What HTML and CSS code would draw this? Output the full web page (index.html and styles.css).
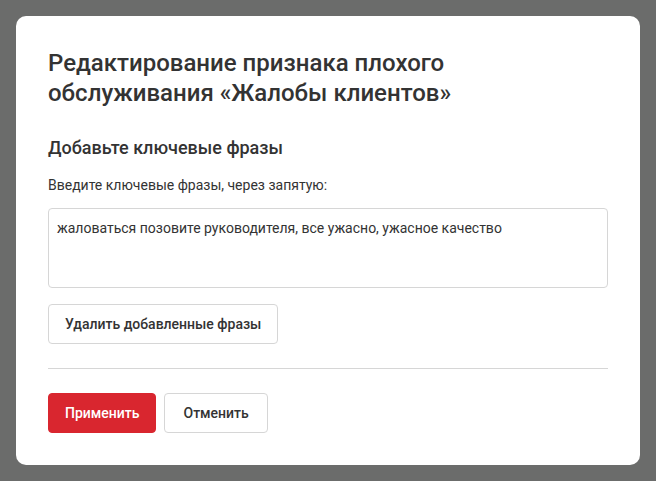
FILE: index.html
```html
<!DOCTYPE html>
<html lang="ru">
<head>
<meta charset="utf-8">
<link rel="stylesheet" href="styles.css">
</head>
<body>
<div class="modal">
  <h1 class="title">Редактирование признака плохого обслуживания «Жалобы клиентов»</h1>
  <h2 class="subtitle">Добавьте ключевые фразы</h2>
  <label class="label" for="phrases">Введите ключевые фразы, через запятую:</label>
  <textarea id="phrases" class="field">жаловаться позовите руководителя, все ужасно, ужасное качество</textarea>
  <div class="row">
    <button class="btn">Удалить добавленные фразы</button>
  </div>
  <hr class="divider">
  <div class="footer">
    <button class="btn btn-primary">Применить</button>
    <button class="btn btn-cancel">Отменить</button>
  </div>
</div>
</body>
</html>
```

FILE: styles.css
```css
* { box-sizing: border-box; }
html, body { margin: 0; }
body {
  background: #6b6c6b;
  padding: 16px;
  font-family: Roboto, "Liberation Sans", sans-serif;
  color: #333;
  height: 481px;
}
.modal {
  width: 624px;
  background: #fff;
  border-radius: 10px;
  padding: 32px 32px 32px;
  display: flex;
  flex-direction: column;
  align-items: flex-start;
}
.title {
  margin: 0;
  font-size: 24px;
  line-height: 30px;
  font-weight: 500;
  color: #333;
  width: 100%;
}
.subtitle {
  margin: 28px 0 0;
  font-size: 18px;
  line-height: 24px;
  font-weight: 500;
  color: #333;
}
.label {
  margin-top: 15px;
  font-size: 14px;
  line-height: 20px;
  color: #333;
}
.field {
  margin-top: 13px;
  width: 100%;
  height: 80px;
  border: 1px solid #d6d6d6;
  border-radius: 4px;
  padding: 9px 8px;
  font-family: Roboto, "Liberation Sans", sans-serif;
  font-size: 14px;
  line-height: 20px;
  color: #333;
  resize: none;
  outline: none;
  display: block;
}
.row { margin-top: 16px; }
.btn {
  height: 40px;
  padding: 0 16px;
  background: #fff;
  border: 1px solid #d6d6d6;
  border-radius: 4px;
  font-family: Roboto, "Liberation Sans", sans-serif;
  font-size: 14px;
  font-weight: 500;
  color: #333;
}
.divider {
  width: 100%;
  margin: 24px 0 0;
  border: 0;
  border-top: 1px solid #d6d6d6;
}
.footer {
  margin-top: 24px;
  display: flex;
  gap: 8px;
}
.btn-primary {
  background: #d9262f;
  border-color: #d9262f;
  color: #fff;
}
.btn-cancel {
  padding: 0 18px;
}
```
